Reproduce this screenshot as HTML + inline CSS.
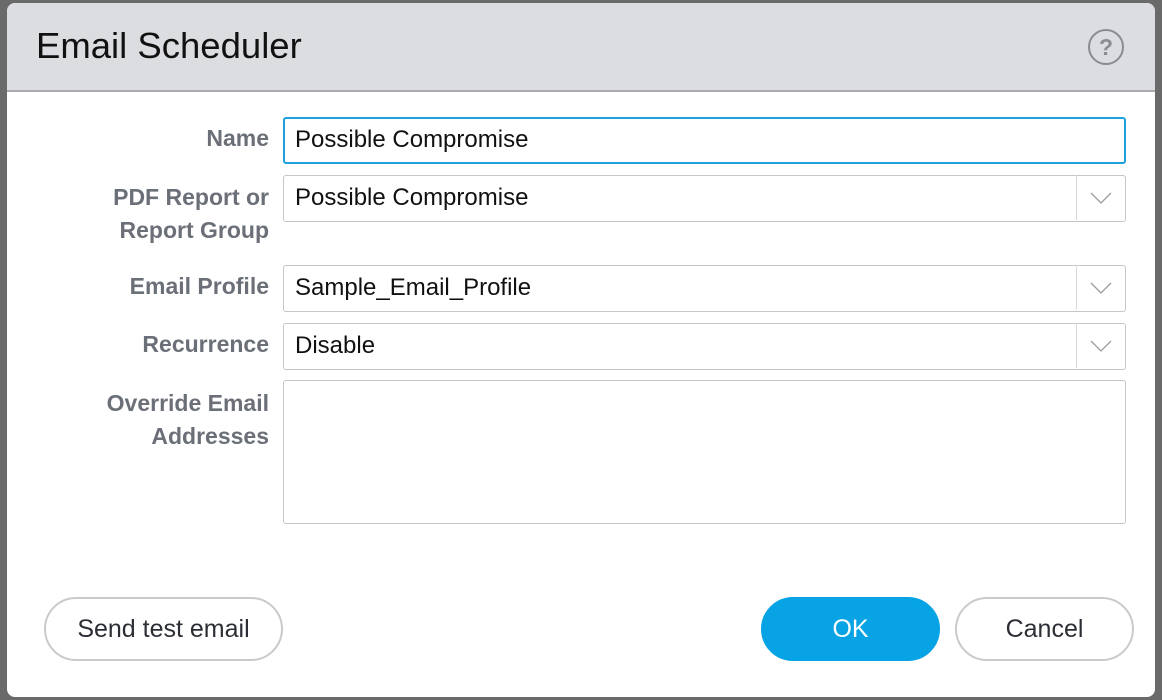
<!DOCTYPE html>
<html><head><style>
html,body{margin:0;padding:0;width:1162px;height:700px;background:#6a6a6a;overflow:hidden;font-family:"Liberation Sans",sans-serif}
.dlg{position:absolute;left:7px;top:3px;width:1148px;height:694px;background:#fff;border-radius:8px;overflow:hidden}
.hdr{position:absolute;left:0;top:0;width:100%;height:87px;background:#dcdde0;border-bottom:2px solid #a9abae}
.title{position:absolute;left:29px;top:22px;font-size:36.5px;color:#111}
.help{position:absolute;left:1081px;top:26px;width:36px;height:36px;border:2px solid #8a8c8f;border-radius:50%;box-sizing:border-box;text-align:center;font-size:23px;line-height:32px;color:#8a8c8f;font-weight:bold}
.lbl{position:absolute;right:886px;text-align:right;font-size:23px;font-weight:bold;color:#6b7078;line-height:33px}
.box{position:absolute;left:276px;width:843px;border:1px solid #c4c6c9;border-radius:3px;box-sizing:border-box;font-size:24px;color:#111;padding-left:11px;line-height:44px}
.dd{position:absolute;right:0;top:-1px;width:48px;height:100%;border-left:1px solid #d8d9db}
.dd svg{position:absolute;left:13px;top:16px}
.btn{position:absolute;top:594px;height:64px;border-radius:32px;box-sizing:border-box;border:2px solid #c8cacd;font-size:25px;color:#2b2f35;text-align:center;line-height:60px;background:#fff}
</style></head><body>
<div class="dlg">
<div class="hdr"><div class="title">Email Scheduler</div><div class="help">?</div></div>
<div class="lbl" style="top:119px">Name</div>
<div class="box" style="top:114px;height:47px;border:2px solid #1ea0dc;line-height:41px;padding-left:10px">Possible Compromise</div>
<div class="lbl" style="top:178px">PDF Report or<br>Report Group</div>
<div class="box" style="top:172px;height:47px">Possible Compromise<div class="dd"><svg width="22" height="14"><path d="M1 2 L11 12 L21 2" fill="none" stroke="#9a9c9f" stroke-width="1.3"/></svg></div></div>
<div class="lbl" style="top:267px">Email Profile</div>
<div class="box" style="top:262px;height:47px">Sample_Email_Profile<div class="dd"><svg width="22" height="14"><path d="M1 2 L11 12 L21 2" fill="none" stroke="#9a9c9f" stroke-width="1.3"/></svg></div></div>
<div class="lbl" style="top:325px">Recurrence</div>
<div class="box" style="top:320px;height:47px">Disable<div class="dd"><svg width="22" height="14"><path d="M1 2 L11 12 L21 2" fill="none" stroke="#9a9c9f" stroke-width="1.3"/></svg></div></div>
<div class="lbl" style="top:384px">Override Email<br>Addresses</div>
<div class="box" style="top:377px;height:144px"></div>
<div class="btn" style="left:37px;width:239px">Send test email</div>
<div class="btn" style="left:754px;width:179px;background:#07a3e4;border-color:#07a3e4;color:#fff">OK</div>
<div class="btn" style="left:948px;width:179px">Cancel</div>
</div>
</body></html>
